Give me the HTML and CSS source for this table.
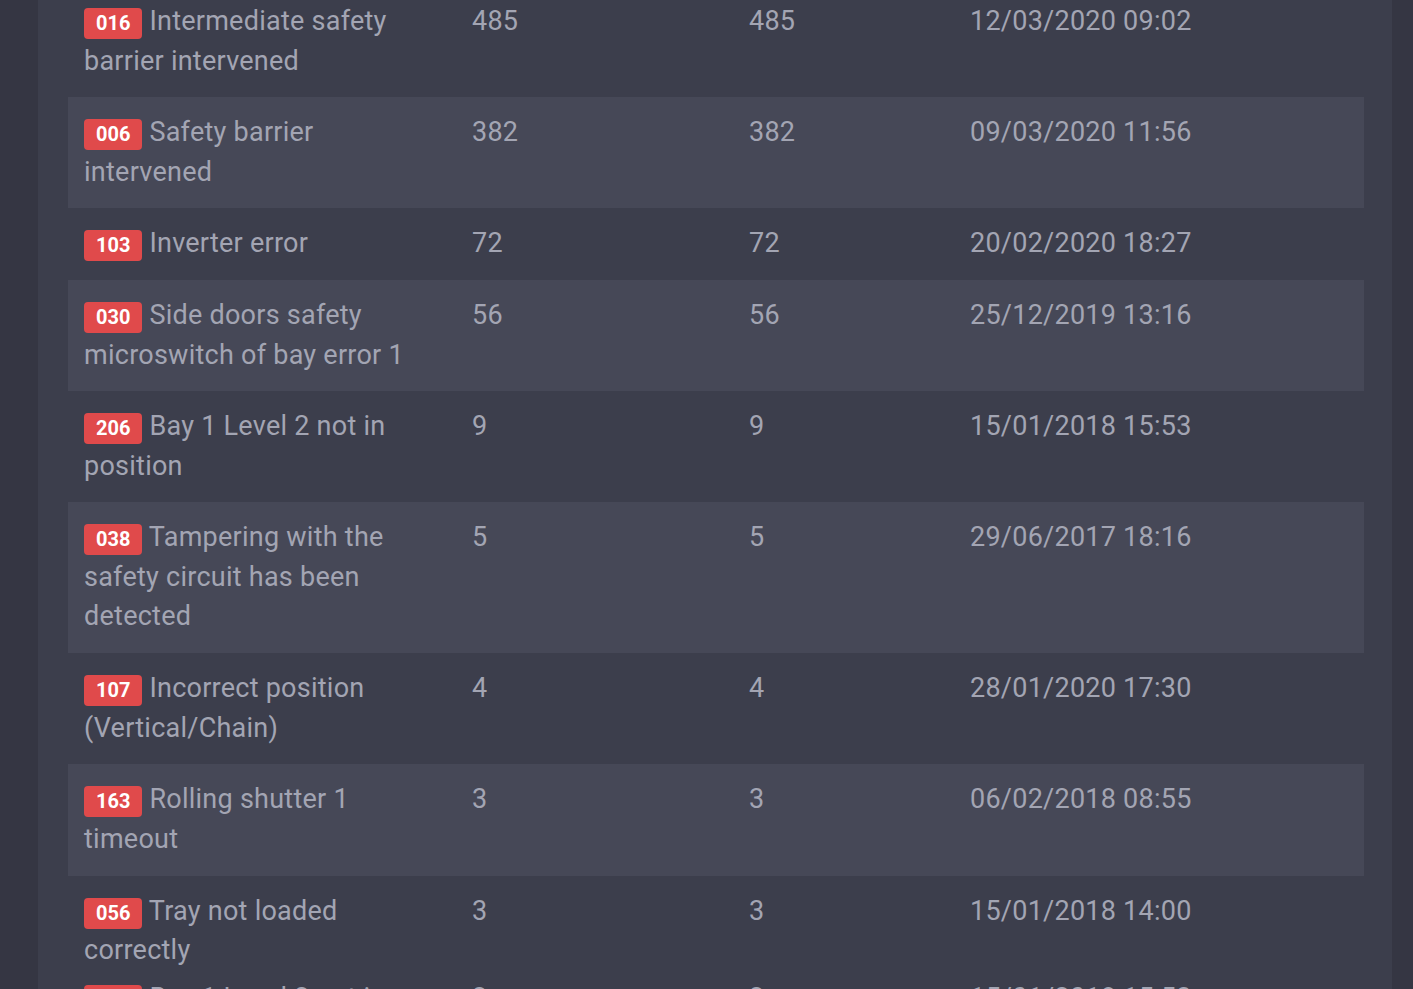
FILE: index.html
```html
<!DOCTYPE html>
<html lang="en">
<head>
<meta charset="utf-8">
<title>Alarms</title>
<link rel="stylesheet" href="styles.css">
</head>
<body>
<div class="panel">
  <div class="table">
    <div class="row">
      <div class="desc"><span class="badge">016</span> Intermediate safety barrier intervened</div>
      <div>485</div><div>485</div><div>12/03/2020 09:02</div>
    </div>
    <div class="row alt">
      <div class="desc"><span class="badge">006</span> Safety barrier intervened</div>
      <div>382</div><div>382</div><div>09/03/2020 11:56</div>
    </div>
    <div class="row">
      <div class="desc"><span class="badge">103</span> Inverter error</div>
      <div>72</div><div>72</div><div>20/02/2020 18:27</div>
    </div>
    <div class="row alt">
      <div class="desc"><span class="badge">030</span> Side doors safety microswitch of bay error 1</div>
      <div>56</div><div>56</div><div>25/12/2019 13:16</div>
    </div>
    <div class="row">
      <div class="desc"><span class="badge">206</span> Bay 1 Level 2 not in position</div>
      <div>9</div><div>9</div><div>15/01/2018 15:53</div>
    </div>
    <div class="row alt">
      <div class="desc"><span class="badge">038</span> Tampering with the safety circuit has been detected</div>
      <div>5</div><div>5</div><div>29/06/2017 18:16</div>
    </div>
    <div class="row">
      <div class="desc"><span class="badge">107</span> Incorrect position (Vertical/Chain)</div>
      <div>4</div><div>4</div><div>28/01/2020 17:30</div>
    </div>
    <div class="row alt">
      <div class="desc"><span class="badge">163</span> Rolling shutter 1 timeout</div>
      <div>3</div><div>3</div><div>06/02/2018 08:55</div>
    </div>
    <div class="row cut">
      <div class="desc"><span class="badge">056</span> Tray not loaded correctly</div>
      <div>3</div><div>3</div><div>15/01/2018 14:00</div>
    </div>
    <div class="row tail">
      <div class="desc"><span class="badge">205</span> Bay 1 Level 2 not in position</div>
      <div>2</div><div>2</div><div>15/01/2018 15:53</div>
    </div>
  </div>
</div>
</body>
</html>
```

FILE: styles.css
```css
html, body {
  margin: 0;
  padding: 0;
  height: 100%;
  overflow: hidden;
}
body {
  background: #353643;
  font-family: Roboto, "Noto Sans", "Liberation Sans", sans-serif;
  color: #a3a5b3;
}
.panel {
  margin-left: 38px;
  width: 1354px;
  min-height: 1100px;
  background: #3c3e4c;
  box-sizing: border-box;
  padding: 0 28px 0 30px;
}
.table {
  margin-top: -14px;
}
.row {
  display: grid;
  grid-template-columns: 388px 277px 221px 1fr;
  padding: 16px 16px 16.2px;
  font-size: 27px;
  letter-spacing: 0.25px;
  line-height: 39.5px;
}
.desc {
  max-width: 342px;
}
.row.alt {
  background: #464857;
}
.row.cut {
  padding-bottom: 0;
}
.row.tail {
  padding-top: 8px;
}
.badge {
  display: inline-block;
  background: #e04a4b;
  color: #ffffff;
  font-weight: 700;
  font-size: 20px;
  letter-spacing: 0;
  line-height: 29px;
  padding: 1px 12px;
  margin-bottom: -1px;
  border-radius: 4px;
}
```
